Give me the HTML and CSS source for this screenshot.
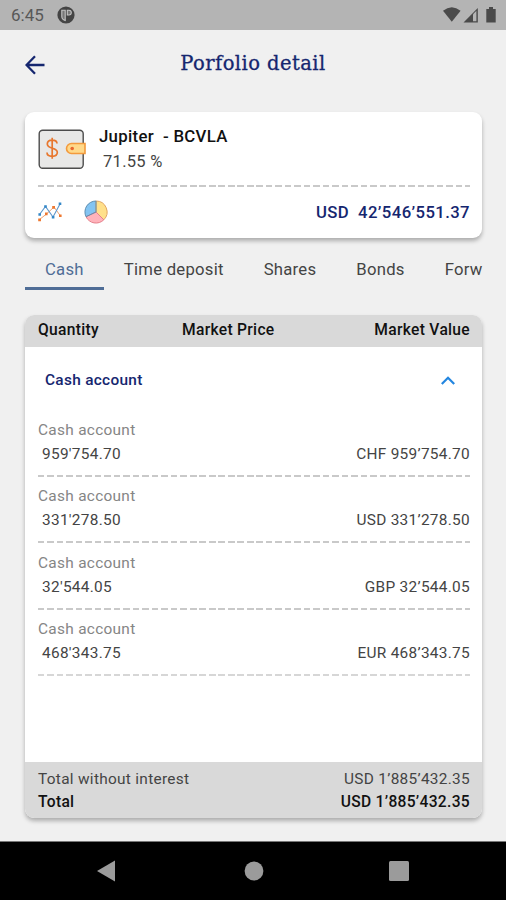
FILE: index.html
```html
<!DOCTYPE html>
<html lang="en">
  <head>
    <meta charset="UTF-8" />
    <meta name="viewport" content="width=device-width, initial-scale=1.0" />
    <title>Porfolio detail</title>
    <link rel="stylesheet" href="styles.css">
  </head>
  <body>
    <div class="status-bar">
      <span class="clock">6:45</span>
      <svg class="app-icon" width="18" height="18" viewBox="0 0 18 18">
        <circle cx="9" cy="9" r="8.6" fill="#444" />
        <path d="M4.8 4.2h3.4v10.2q-3.4-1-3.4-4zM10.3 4.2h1.6a2.3 2.3 0 0 1 0 4.8h-1.6z" fill="#777" stroke="#c4c4c4" stroke-width="1.1" />
      </svg>
      <svg class="system-icons" width="56" height="18" viewBox="0 0 56 18">
        <path d="M1 4.8Q9.8-2.2 18.6 4.8L9.8 15.8z" fill="#4a4a4a" />
        <path d="M21.5 16.5L35.8 2v14.5z" fill="#4a4a4a" />
        <path d="M31 8.2l3.4-3.4v10.4H31z" fill="#b4b4b4" />
        <path d="M47 1h4v2h2.7v13.6h-9.4V3H47z" fill="#4a4a4a" />
      </svg>
    </div>

    <div class="header">
      <svg class="back" width="20" height="20" viewBox="0 0 20 20">
        <path d="M19.5 10H2M10 1.2L1.5 10l8.5 8.8" />
      </svg>
      <h1>Porfolio detail</h1>
    </div>

    <div class="card summary">
      <div class="summary-top">
        <svg class="wallet" width="48" height="42" viewBox="0 0 48 42">
          <rect x="1.2" y="2.2" width="44" height="38" rx="3.5" fill="#e8e8e7" stroke="#4c4c4c" stroke-width="1.4" />
          <path d="M19 15.5c0-2.2-2-3.4-4.8-3.4s-4.9 1.3-4.9 4c0 5.6 10 2.7 10 8.2 0 2.6-2.1 4-5 4s-5.3-1.4-5.3-3.8M14.2 9.7v21" fill="none" stroke="#e8772e" stroke-width="1.7" />
          <path d="M47 15.5H33.5a5 5 0 0 0 0 10H47z" fill="#ffd98a" stroke="#f39a3d" stroke-width="1.6" />
          <circle cx="34.2" cy="20.5" r="1.8" fill="#e8672e" />
        </svg>
        <div>
          <div class="name">Jupiter&nbsp; - BCVLA</div>
          <div class="percent">71.55 %</div>
        </div>
      </div>
      <div class="dashes"></div>
      <div class="summary-bottom">
        <svg class="chart-icon" width="24" height="20" viewBox="0 0 24 20">
          <path d="M1.5 17.5l7-5.5 7.5-7 6.5 9" fill="none" stroke="#f0a070" stroke-width="1" />
          <path d="M1.5 12.5l6-8 7.5 10.5 7-13" fill="none" stroke="#5f97ca" stroke-width="1.1" />
          <path d="M.2 16.5h2.8v2.8H.2zM7 10.6h2.6v2.6H7zM14.2 4h2.8v2.8h-2.8zM21 12.4h2.6v2.6H21z" fill="#ee7830" />
          <path d="M.4 11.2H3v2.6H.4zM6.2 3.2h2.6v2.6H6.2zM13.8 14h2.6v2.6h-2.6zM20.7.4h2.6V3h-2.6z" fill="#3488c8" />
        </svg>
        <svg class="pie-icon" width="24" height="24" viewBox="0 0 24 24">
          <path d="M12 12V1a11 11 0 0 1 7.8 18.8z" fill="#ffe08a" />
          <path d="M12 12l7.8 7.8A11 11 0 0 1 2 16.7z" fill="#ffb3bb" />
          <path d="M12 12L2 16.7A11 11 0 0 1 12 1z" fill="#83c4f2" />
          <path d="M12 1a11 11 0 0 1 7.8 18.8L12 12z" fill="none" stroke="#e2a560" />
          <path d="M19.8 19.8A11 11 0 0 1 2 16.7L12 12z" fill="none" stroke="#e5808b" />
          <path d="M2 16.7A11 11 0 0 1 12 1v11z" fill="none" stroke="#608eb0" />
        </svg>
        <span class="amount">USD&nbsp; 42’546’551.37</span>
      </div>
    </div>

    <div class="tabs">
      <span class="tab active">Cash</span>
      <span class="tab">Time deposit</span>
      <span class="tab">Shares</span>
      <span class="tab">Bonds</span>
      <span class="tab">Forw</span>
    </div>

    <div class="card positions">
      <div class="columns">
        <span>Quantity</span>
        <span>Market Price</span>
        <span>Market Value</span>
      </div>
      <div class="group">
        <span>Cash account</span>
        <svg width="14" height="9" viewBox="0 0 14 9">
          <path d="M.8 8L7 1.8 13.2 8" />
        </svg>
      </div>
      <div class="rows">
        <div class="row">
          <div class="label">Cash account</div>
          <div class="values"><span>959'754.70</span><span>CHF 959’754.70</span></div>
          <div class="dashes"></div>
        </div>
        <div class="row">
          <div class="label">Cash account</div>
          <div class="values"><span>331'278.50</span><span>USD 331’278.50</span></div>
          <div class="dashes"></div>
        </div>
        <div class="row">
          <div class="label">Cash account</div>
          <div class="values"><span>32'544.05</span><span>GBP 32’544.05</span></div>
          <div class="dashes"></div>
        </div>
        <div class="row">
          <div class="label">Cash account</div>
          <div class="values"><span>468'343.75</span><span>EUR 468’343.75</span></div>
          <div class="dashes light"></div>
        </div>
      </div>
      <div class="totals">
        <div class="total-line"><span>Total without interest</span><span>USD 1’885’432.35</span></div>
        <div class="total-line bold"><span>Total</span><span>USD 1’885’432.35</span></div>
      </div>
    </div>

    <div class="nav-bar">
      <svg width="18" height="22" viewBox="0 0 18 22"><path d="M0 11L18 .5v21z" /></svg>
      <svg class="home" width="20" height="20" viewBox="0 0 20 20"><circle cx="10" cy="10" r="9.4" /></svg>
      <svg width="20" height="20" viewBox="0 0 20 20"><rect width="20" height="20" rx="1.5" /></svg>
    </div>
  </body>
</html>
```
FILE: styles.css
```css
:root {
  --navy: #15266f;
  --background-color: #f0f0f0;
  --bar-color: #d9d9d9;
  --text-color: #444;
  --border-radius: 9px;
}

* {
  box-sizing: border-box;
}

body {
  display: flex;
  flex-direction: column;
  height: 900px;
  margin: 0;
  overflow: hidden;
  background-color: var(--background-color);
  color: var(--text-color);
  font-family: Roboto, "Liberation Sans", sans-serif;
  font-size: 15.4px;
  letter-spacing: 0.3px;
}

svg {
  display: block;
  flex: none;
}

.status-bar {
  display: flex;
  align-items: center;
  height: 30px;
  padding: 0 8px 0 11px;
  background-color: #b4b4b4;
}

.clock {
  width: 46px;
  color: #585858;
  font-size: 17px;
  letter-spacing: 0;
}

.system-icons {
  margin-left: auto;
}

.header {
  display: grid;
  grid-template-columns: 40px 1fr 40px;
  align-items: center;
  height: 69px;
  padding: 0 25px;
}

.back {
  fill: none;
  stroke: var(--navy);
  stroke-width: 2.3;
}

h1 {
  margin: -2px 0 0;
  color: var(--navy);
  font-family: "DejaVu Serif", serif;
  font-size: 19.5px;
  font-weight: normal;
  letter-spacing: 0.45px;
  text-align: center;
  -webkit-text-stroke: 0.3px var(--navy);
}

.card {
  margin: 0 24px 0 25px;
  border-radius: var(--border-radius);
  background-color: white;
  box-shadow: 0 3px 4px rgba(0, 0, 0, 0.28);
}

.summary {
  height: 126px;
  margin-top: 13px;
  padding: 0 12px 0 13px;
}

.summary-top {
  display: flex;
  gap: 13px;
  height: 73px;
  padding-top: 14px;
}

.wallet {
  margin-top: 2px;
}

.name {
  color: #111;
  font-size: 16.8px;
  font-weight: 500;
  line-height: 20px;
}

.percent {
  margin-top: 6px;
  padding-left: 4px;
  font-size: 16.5px;
  line-height: 20px;
}

.dashes {
  height: 2px;
  background: repeating-linear-gradient(to right, #c9c9c9 0 6.5px, transparent 6.5px 9.5px);
}

.dashes.light {
  opacity: 0.75;
}

.summary-bottom {
  display: flex;
  align-items: center;
  height: 50px;
}

.pie-icon {
  margin-left: 22px;
}

.amount {
  margin-left: auto;
  color: var(--navy);
  font-size: 16.7px;
  font-weight: 500;
  letter-spacing: 0.4px;
}

.tabs {
  display: flex;
  height: 52px;
  margin: 0 23px 0 25px;
  overflow: hidden;
  font-size: 16.7px;
  letter-spacing: 0.25px;
}

.tab {
  height: 52px;
  padding: 0 20px;
  line-height: 63px;
  white-space: nowrap;
}

.tab:last-child {
  padding-right: 0;
}

.tab.active {
  border-bottom: 3px solid #4f6d96;
  color: #4f6d96;
}

.positions {
  display: flex;
  flex-direction: column;
  height: 503px;
  margin-top: 25px;
  overflow: hidden;
}

.columns {
  display: grid;
  grid-template-columns: 1fr 1fr 1fr;
  align-items: center;
  height: 32px;
  padding: 0 12px 2px 13px;
  background-color: var(--bar-color);
  color: #111;
  font-size: 15.6px;
  font-weight: 500;
}

.columns span:last-child {
  text-align: right;
}

.group {
  display: flex;
  align-items: center;
  justify-content: space-between;
  height: 66.5px;
  padding: 0 27px 0 20px;
  color: var(--navy);
  font-weight: 500;
}

.group svg {
  fill: none;
  stroke: #2386e0;
  stroke-width: 2.2;
}

.rows {
  flex: 1;
  padding: 0 12px 0 13px;
}

.row {
  height: 66.5px;
  padding-top: 6px;
}

.label {
  color: #858585;
  line-height: 20px;
}

.values {
  display: flex;
  justify-content: space-between;
  margin: 4px 0 11px;
  padding-left: 4px;
  line-height: 20px;
}

.totals {
  height: 56px;
  padding: 6px 12px 0 13px;
  background-color: var(--bar-color);
}

.total-line {
  display: flex;
  justify-content: space-between;
  line-height: 22.5px;
}

.total-line.bold {
  color: #111;
  font-size: 15.6px;
  font-weight: 500;
}

.nav-bar {
  display: flex;
  align-items: center;
  justify-content: space-between;
  height: 59px;
  margin-top: auto;
  padding: 0 97px;
  border-top: 1px solid #777;
  background-color: black;
  fill: #9b9b9b;
}

.nav-bar .home {
  margin-left: 3px;
}
```
